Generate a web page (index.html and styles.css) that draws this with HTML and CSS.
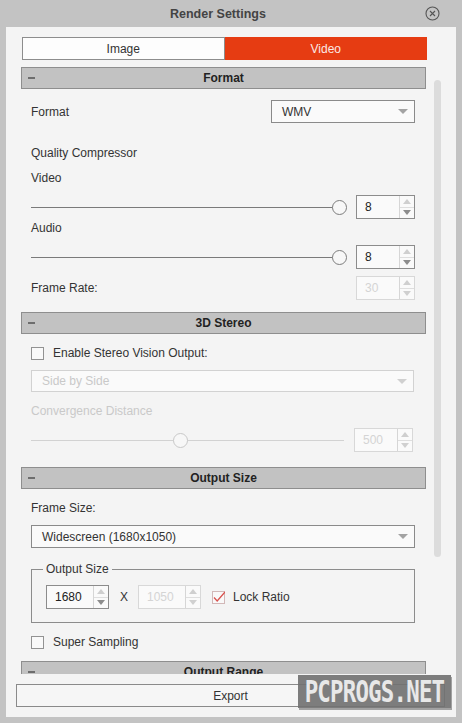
FILE: index.html
```html
<!DOCTYPE html>
<html lang="en">
<head>
  <meta charset="UTF-8" />
  <meta name="viewport" content="width=device-width, initial-scale=1.0" />
  <title>Render Settings</title>
  <link rel="stylesheet" href="styles.css">
</head>
<body>
  <div class="titlebar">
    <span class="title">Render Settings</span>
    <svg class="close" width="15" height="15" viewBox="0 0 15 15">
      <circle cx="7.5" cy="7.5" r="6.5" fill="none" stroke="#555" stroke-width="1.1"/>
      <path d="M5 5 L10 10 M10 5 L5 10" stroke="#555" stroke-width="1.1"/>
    </svg>
  </div>

  <div class="panel">
    <div class="tabs">
      <div class="tab">Image</div>
      <div class="tab active">Video</div>
    </div>

    <div class="scroller">
      <div class="content">
        <div class="section-head">Format</div>

        <div class="row split first">
          <span class="label">Format</span>
          <div class="select short">WMV<span class="caret"></span></div>
        </div>

        <div class="row text gap-lg">Quality Compressor</div>
        <div class="row text gap-sm">Video</div>
        <div class="row slider-row">
          <div class="slider"><span class="knob" style="left: 97.8%"></span></div>
          <div class="spin">
            <span class="spin-val">8</span>
            <span class="spin-btns"><i class="up"></i><i class="down"></i></span>
          </div>
        </div>
        <div class="row text">Audio</div>
        <div class="row slider-row">
          <div class="slider"><span class="knob" style="left: 97.8%"></span></div>
          <div class="spin">
            <span class="spin-val">8</span>
            <span class="spin-btns"><i class="up"></i><i class="down"></i></span>
          </div>
        </div>
        <div class="row split gap-sm">
          <span class="label">Frame Rate:</span>
          <div class="spin disabled">
            <span class="spin-val">30</span>
            <span class="spin-btns"><i class="up"></i><i class="down"></i></span>
          </div>
        </div>

        <div class="section-head">3D Stereo</div>

        <div class="row text check-row gap-md">
          <span class="check"></span>Enable Stereo Vision Output:
        </div>
        <div class="row dim">
          <div class="select disabled">Side by Side<span class="caret"></span></div>
        </div>
        <div class="row text muted gap-md">Convergence Distance</div>
        <div class="row slider-row dim">
          <div class="slider disabled"><span class="knob" style="left: 47.6%"></span></div>
          <div class="spin disabled">
            <span class="spin-val">500</span>
            <span class="spin-btns"><i class="up"></i><i class="down"></i></span>
          </div>
        </div>

        <div class="section-head wide">Output Size</div>

        <div class="row text gap-md">Frame Size:</div>
        <div class="row">
          <div class="select">Widescreen (1680x1050)<span class="caret"></span></div>
        </div>

        <fieldset class="row group">
          <legend>Output Size</legend>
          <div class="group-line">
            <div class="spin size">
              <span class="spin-val">1680</span>
              <span class="spin-btns"><i class="up"></i><i class="down"></i></span>
            </div>
            <span class="times">X</span>
            <div class="spin size disabled">
              <span class="spin-val">1050</span>
              <span class="spin-btns"><i class="up"></i><i class="down"></i></span>
            </div>
            <span class="check checked">
              <svg width="13" height="13" viewBox="0 0 13 13">
                <path d="M2 6.5 L5.2 10 L13 1" fill="none" stroke="#d9534f" stroke-width="1.3"/>
              </svg>
            </span>
            <span class="lock">Lock Ratio</span>
          </div>
        </fieldset>

        <div class="row text check-row gap-md">
          <span class="check"></span>Super Sampling
        </div>

        <div class="section-head">Output Range</div>
      </div>
      <div class="scrollbar"></div>
    </div>

    <button class="export">Export</button>
  </div>

  <div class="watermark"><span>PCPROGS.NET</span></div>
</body>
</html>
```

FILE: styles.css
```css
body {
  margin: 0;
  height: 723px;
  overflow: hidden;
  background: #c3c3c3;
  font-family: 'Liberation Sans', Arial, sans-serif;
  font-size: 12px;
  color: #333;
  position: relative;
}
.titlebar {
  height: 28px;
  display: flex;
  align-items: center;
}
.title {
  margin-left: 170px;
  font-weight: bold;
  font-size: 12.5px;
  color: #444;
}
.close {
  margin-left: auto;
  margin-right: 22px;
  margin-top: -2px;
}
.panel {
  margin: -1px 6px 0;
  height: 690px;
  box-sizing: border-box;
  padding: 10px 0 10px;
  background: #f4f4f4;
  display: flex;
  flex-direction: column;
}
.tabs {
  display: flex;
  margin: 0 29px 0 16px;
  height: 23px;
}
.tab {
  flex: 1;
  box-sizing: border-box;
  border: 1px solid #8d8d8d;
  background: #fdfdfd;
  text-align: center;
  line-height: 22px;
  color: #333;
}
.tab.active {
  background: #e63c12;
  border-color: #e63c12;
  color: #fbe9e4;
}
.scroller {
  display: flex;
  height: 614px;
  overflow: hidden;
  flex: none;
}
.content {
  width: 405px;
  margin-left: 15px;
  flex: none;
}
.scrollbar {
  width: 7px;
  height: 477px;
  margin: 20px 0 0 8px;
  background: #dcdcdc;
  border-radius: 4px;
}
.section-head {
  position: relative;
  height: 22px;
  box-sizing: border-box;
  border: 1px solid #8e8e8e;
  background: #c2c2c2;
  text-align: center;
  line-height: 21px;
  font-weight: bold;
  color: #222;
  margin-top: 12px;
}
.section-head:first-child {
  margin-top: 7px;
}
.section-head.wide {
  margin-top: 15px;
}
.section-head::before {
  content: '';
  position: absolute;
  left: 6px;
  top: 9px;
  width: 7px;
  height: 2px;
  background: #6d6d6d;
}
.row {
  margin: 8px 11px 0 10px;
}
.row.dim {
  margin-right: 12px;
}
.row.slider-row.dim {
  margin-right: 13px;
}
.row.first {
  margin-top: 11px;
}
.row.gap-lg {
  margin-top: 21px;
}
.row.gap-md {
  margin-top: 10px;
}
.row.gap-sm {
  margin-top: 7px;
}
.row.text {
  height: 18px;
  line-height: 18px;
}
.row.text + .slider-row {
  margin-top: 8px;
}
.text + .text {
  margin-top: 7px;
}
.slider-row + .text {
  margin-top: 0;
}
.muted {
  color: #c9c9c9;
}
.split {
  display: flex;
  justify-content: space-between;
  align-items: center;
}
.select {
  position: relative;
  height: 23px;
  box-sizing: border-box;
  border: 1px solid #8a8a8a;
  background: #fafafa;
  line-height: 22px;
  padding-left: 10px;
  color: #333;
}
.select.short {
  width: 144px;
}
.select.disabled {
  height: 22px;
  line-height: 21px;
  border-color: #d2d2d2;
  color: #c9c9c9;
}
.caret {
  position: absolute;
  right: 6px;
  top: 8px;
  width: 0;
  height: 0;
  border-left: 5px solid transparent;
  border-right: 5px solid transparent;
  border-top: 5px solid #a3a3a3;
}
.select.disabled .caret {
  border-top-color: #d0d0d0;
}
.slider-row {
  display: flex;
  align-items: center;
  height: 24px;
}
.slider {
  position: relative;
  flex: 1;
  height: 24px;
  margin-right: 10px;
}
.slider::before {
  content: '';
  position: absolute;
  left: 0;
  right: 0;
  top: 12px;
  height: 1px;
  background: #7a7a7a;
}
.knob {
  position: absolute;
  top: 5px;
  width: 15px;
  height: 15px;
  margin-left: -7px;
  box-sizing: border-box;
  border: 1.5px solid #7c7c7c;
  border-radius: 50%;
  background: #f7f7f7;
}
.slider.disabled::before {
  background: #d2d2d2;
}
.slider.disabled .knob {
  border-color: #c8c8c8;
}
.spin {
  width: 59px;
  height: 24px;
  box-sizing: border-box;
  border: 1px solid #8c8c8c;
  background: #fafafa;
  display: flex;
  flex: none;
}
.spin-val {
  flex: 1;
  padding-left: 8px;
  line-height: 23px;
  color: #222;
}
.spin-btns {
  width: 14px;
  border-left: 1px solid #d6d6d6;
  display: flex;
  flex-direction: column;
}
.spin-btns i {
  flex: 1;
  display: flex;
  align-items: center;
  justify-content: center;
}
.spin-btns i + i {
  border-top: 1px solid #dedede;
}
.spin-btns .up::before {
  content: '';
  border-left: 4px solid transparent;
  border-right: 4px solid transparent;
  border-bottom: 5px solid #cfcfcf;
}
.spin-btns .down::before {
  content: '';
  border-left: 4px solid transparent;
  border-right: 4px solid transparent;
  border-top: 5px solid #8d8d8d;
}
.spin.disabled {
  border-color: #d8d8d8;
}
.spin.disabled .spin-val {
  color: #d4d4d4;
}
.spin.disabled .spin-btns .down::before {
  border-top-color: #d0d0d0;
}
.spin.size {
  width: 63px;
}
.check-row {
  display: flex;
  align-items: center;
}
.check {
  width: 13px;
  height: 13px;
  box-sizing: border-box;
  border: 1px solid #929292;
  background: #f9f9f9;
  margin-right: 9px;
  flex: none;
}
.check.checked {
  border-color: #d2b8b8;
  margin: 0 8px 0 11px;
  overflow: visible;
}
.check.checked svg {
  display: block;
  margin: -1px 0 0 -1px;
}
.group {
  margin-top: 14px;
  padding: 9px 10px 13px 14px;
  border: 1px solid #8c8c8c;
  min-width: 0;
}
.group legend {
  padding: 0 3px;
  margin-left: -3px;
  line-height: 14px;
  color: #333;
}
.group-line {
  display: flex;
  align-items: center;
}
.times {
  margin: 0 10px 0 11px;
  color: #333;
}
.lock {
  color: #333;
}
.group + .check-row {
  margin-top: 10px;
}
.check-row + .section-head {
  margin-top: 10px;
}
.export {
  margin: 10px 11px 0 10px;
  height: 23px;
  box-sizing: border-box;
  border: 1px solid #8a8a8a;
  background: #f6f6f6;
  font-family: inherit;
  font-size: 12px;
  color: #333;
  padding: 0;
}
.watermark {
  position: absolute;
  left: 298px;
  top: 675px;
  width: 153px;
  height: 33px;
  background: rgba(112, 112, 112, 0.9);
  color: #e8e8e8;
  font-family: 'DejaVu Sans Mono', monospace;
  font-weight: bold;
  font-size: 22px;
  line-height: 33px;
  text-align: center;
  box-shadow: 1px 2px 0 rgba(80, 80, 80, 0.5);
}
.watermark span {
  display: inline-block;
  letter-spacing: -0.8px;
  transform: scale(1.02, 1.4);
}
```
